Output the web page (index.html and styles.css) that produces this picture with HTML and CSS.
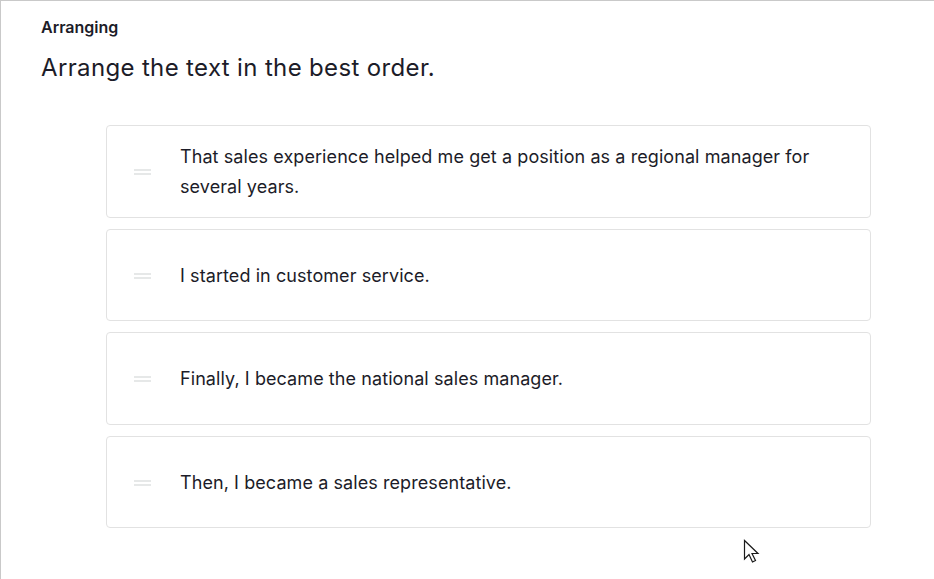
FILE: index.html
```html
<!DOCTYPE html>
<html lang="en">
<head>
    <meta charset="UTF-8">
    <meta name="viewport" content="width=device-width, initial-scale=1.0">
    <title>Arranging</title>
    <link rel="stylesheet" href="styles.css">
</head>
<body>
    <main class="page">
        <h2 class="label">Arranging</h2>
        <h1 class="prompt">Arrange the text in the best order.</h1>

        <!-- Sortable items -->
        <ul class="sort-list">
            <li class="sort-item">
                <span class="handle"></span>
                <span class="item-text">That sales experience helped me get a position as a regional manager for several years.</span>
            </li>
            <li class="sort-item">
                <span class="handle"></span>
                <span class="item-text">I started in customer service.</span>
            </li>
            <li class="sort-item">
                <span class="handle"></span>
                <span class="item-text">Finally, I became the national sales manager.</span>
            </li>
            <li class="sort-item">
                <span class="handle"></span>
                <span class="item-text">Then, I became a sales representative.</span>
            </li>
        </ul>
    </main>

    <svg class="cursor" width="18" height="28" viewBox="0 0 18 28">
        <path d="M1.5 1.5 L1.5 20 L6 15.5 L9.5 23 L12.5 21.5 L9 14.5 L15 14.5 Z" fill="#fff" stroke="#1a1a1a" stroke-width="1.2" stroke-linejoin="miter"/>
    </svg>
</body>
</html>
```

FILE: styles.css
```css
html, body {
    height: 100%;
}
body {
    margin: 0;
    font-family: Inter, "Noto Sans", sans-serif;
    color: #1c1c28;
    background-color: #ffffff;
}
.page {
    box-sizing: border-box;
    min-height: 100%;
    border-top: 1px solid #c9c9c9;
    border-left: 1px solid #c9c9c9;
    padding: 15px 40px 20px;
}
.label {
    margin: 0;
    font-size: 16px;
    font-weight: 600;
    line-height: 22px;
}
.prompt {
    margin: 14px 0 0;
    font-size: 24px;
    font-weight: 400;
    line-height: 32px;
    letter-spacing: 0.35px;
}
.sort-list {
    list-style-type: none;
    margin: 41px 0 0 65px;
    padding: 0;
    width: 765px;
    display: flex;
    flex-direction: column;
    gap: 11px;
}
.sort-item {
    box-sizing: border-box;
    display: flex;
    align-items: center;
    min-height: 92.5px;
    padding: 16px 40px 14px 27px;
    border: 1px solid #e2e2e2;
    border-radius: 4px;
    background-color: #fff;
}
.handle {
    flex: none;
    width: 17px;
    height: 6px;
    border-top: 2px solid #e6e8e8;
    border-bottom: 2px solid #e6e8e8;
    box-sizing: border-box;
    margin-right: 29px;
}
.item-text {
    font-size: 18px;
    line-height: 30px;
    letter-spacing: 0.08px;
}
.cursor {
    position: absolute;
    left: 743px;
    top: 539px;
}
```
